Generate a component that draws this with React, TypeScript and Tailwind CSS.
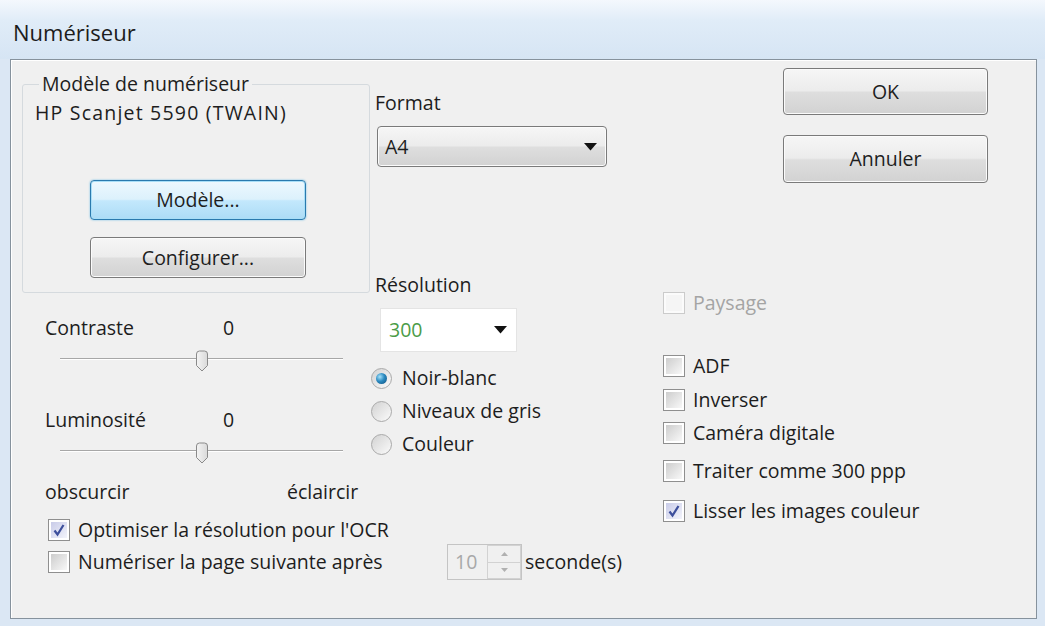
import type { ReactNode } from 'react'

const grayBtn =
  'border-[#7a7a7a] bg-[linear-gradient(to_bottom,#f6f6f6_0%,#ececec_48%,#dedede_52%,#d2d2d2_100%)] shadow-[inset_0_0_0_1px_#fbfbfb]'
const hotBtn =
  'border-[#2a7aae] bg-[linear-gradient(to_bottom,#edf8fe_0%,#dcf1fc_48%,#c3e8fc_52%,#acdcf6_100%)] shadow-[inset_0_0_0_1px_#a8def7,0_0_2px_#62b7e3]'

function WinButton({ children, hot, className }: { children: ReactNode; hot?: boolean; className?: string }) {
  return (
    <button
      type="button"
      className={`flex items-center justify-center rounded-[4px] border text-[#1e1e1e] ${hot ? hotBtn : grayBtn} ${className ?? ''}`}
    >
      {children}
    </button>
  )
}

function Arrow() {
  return (
    <svg width="13" height="8" viewBox="0 0 13 8">
      <polygon points="0,0 13,0 6.5,7.5" fill="#111" />
    </svg>
  )
}

function Check({ checked, disabled }: { checked?: boolean; disabled?: boolean }) {
  let inner = 'bg-[linear-gradient(135deg,#cdcdcd,#f8f8f8)]'
  if (checked) inner = 'bg-[linear-gradient(135deg,#c8cbe8,#f3f4fb)]'
  if (disabled) inner = 'bg-[#f5f5f5]'
  return (
    <span
      className={`flex h-[22px] w-[22px] shrink-0 items-center justify-center border ${
        disabled ? 'border-[#cbcbcb] bg-[#fbfbfb]' : 'border-[#8f8f8f] bg-white'
      }`}
    >
      <span className={`flex h-[16px] w-[16px] items-center justify-center ${inner}`}>
        {checked && (
          <svg width="14" height="14" viewBox="0 0 14 14">
            <path d="M2.5 7.5 L5.5 11.5 L11.5 2" fill="none" stroke="#3d4f9c" strokeWidth="2.2" />
          </svg>
        )}
      </span>
    </span>
  )
}

function CheckRow({
  label,
  checked,
  disabled,
  className,
}: {
  label: string
  checked?: boolean
  disabled?: boolean
  className?: string
}) {
  return (
    <div className={`flex h-[24px] items-center gap-[8px] ${className ?? ''}`}>
      <Check checked={checked} disabled={disabled} />
      <span className={disabled ? 'text-[#a4a4a4]' : ''}>{label}</span>
    </div>
  )
}

function Radio({ label, checked }: { label: string; checked?: boolean }) {
  return (
    <div className="flex h-[22px] items-center gap-[10px]">
      <span className="flex h-[21px] w-[21px] shrink-0 items-center justify-center rounded-full border border-[#a9a9a9] bg-[linear-gradient(135deg,#d2d2d2,#fbfbfb)]">
        {checked && (
          <span className="h-[11px] w-[11px] rounded-full bg-[radial-gradient(circle_at_35%_35%,#a6e2fb_0%,#2b8ac0_45%,#0c4c7c_100%)]" />
        )}
      </span>
      <span>{label}</span>
    </div>
  )
}

function Slider() {
  return (
    <div className="relative ml-[38px] mt-[11px] h-[22px] w-[283px]">
      <div className="mt-[8px] h-px bg-[#a7a7a7]" />
      <div className="h-px bg-white" />
      <svg className="absolute left-[135px] top-0" width="14" height="22" viewBox="0 0 14 22">
        <defs>
          <linearGradient id="thumb" x1="0" x2="1" y1="0" y2="0">
            <stop offset="0" stopColor="#f4f4f4" />
            <stop offset="1" stopColor="#d9d9d9" />
          </linearGradient>
        </defs>
        <path
          d="M1.5 4 Q1.5 1 4.5 1 H9.5 Q12.5 1 12.5 4 V15.5 L7 21 L1.5 15.5 Z"
          fill="url(#thumb)"
          stroke="#8a8a8a"
          strokeWidth="1"
        />
      </svg>
    </div>
  )
}

export default function App() {
  return (
    <div className="flex h-[626px] w-[1045px] flex-col bg-[#dbe7f4] font-['Open_Sans','Noto_Sans',sans-serif] text-[19.5px] leading-[22px] text-[#1d1d1d]">
      <div className="flex h-[59px] shrink-0 items-center bg-[linear-gradient(to_bottom,#f4f8fd_0%,#e0ecf8_35%,#d6e5f4_100%)] pl-[13px] pt-[4px] text-[22px] text-[#1c1c1c]">
        Numériseur
      </div>

      <div className="ml-[10px] grid h-[560px] w-[1027px] grid-cols-[349px_291px_1fr] grid-rows-[auto_1fr] border border-[#86929d] bg-[#f0f0f0] pl-[11px] shadow-[inset_1px_1px_0_#fff]">
        {/* left column */}
        <div className="flex flex-col">
          <fieldset className="mt-[13px] h-[220px] w-[348px] rounded-[3px] border border-[#d5dade] pl-[12px]">
            <legend className="ml-[4px] px-[3px]">Modèle de numériseur</legend>
            <div className="mt-[7px] tracking-[1.2px]">HP Scanjet 5590 (TWAIN)</div>
            <WinButton hot className="ml-[55px] mt-[56px] h-[40px] w-[216px]">
              Modèle...
            </WinButton>
            <WinButton className="ml-[55px] mt-[17px] h-[41px] w-[216px]">Configurer...</WinButton>
          </fieldset>

          <div className="ml-[23px] mt-[24px] flex">
            <span className="w-[178px]">Contraste</span>
            <span>0</span>
          </div>
          <Slider />
          <div className="ml-[23px] mt-[37px] flex">
            <span className="w-[178px]">Luminosité</span>
            <span>0</span>
          </div>
          <Slider />
          <div className="ml-[23px] mt-[17px] flex">
            <span className="w-[242px]">obscurcir</span>
            <span>éclaircir</span>
          </div>
        </div>

        {/* middle column */}
        <div className="flex flex-col items-start">
          <div className="ml-[4px] mt-[32px]">Format</div>
          <div className={`ml-[6px] mt-[12px] flex h-[41px] w-[230px] items-center justify-between rounded-[4px] border pl-[7px] pr-[9px] ${grayBtn}`}>
            <span className="text-[#1e1e1e]">A4</span>
            <Arrow />
          </div>
          <div className="ml-[4px] mt-[107px]">Résolution</div>
          <div className="ml-[9px] mt-[12px] flex h-[44px] w-[137px] items-center justify-between border border-[#e4e4e4] bg-white pl-[8px] pr-[9px]">
            <span className="text-[#4b9c47]">300</span>
            <Arrow />
          </div>
          <div className="mt-[15px] flex flex-col gap-[11px]">
            <Radio label="Noir-blanc" checked />
            <Radio label="Niveaux de gris" />
            <Radio label="Couleur" />
          </div>
        </div>

        {/* right column */}
        <div className="row-span-2 flex flex-col">
          <WinButton className="ml-[121px] mt-[8px] h-[47px] w-[205px]">OK</WinButton>
          <WinButton className="ml-[121px] mt-[20px] h-[48px] w-[205px]">Annuler</WinButton>
          <CheckRow label="Paysage" disabled className="ml-[1px] mt-[108px]" />
          <CheckRow label="ADF" className="ml-[1px] mt-[39px]" />
          <CheckRow label="Inverser" className="ml-[1px] mt-[10px]" />
          <CheckRow label="Caméra digitale" className="ml-[1px] mt-[9px]" />
          <CheckRow label="Traiter comme 300 ppp" className="ml-[1px] mt-[14px]" />
          <CheckRow label="Lisser les images couleur" checked className="ml-[1px] mt-[16px]" />
        </div>

        {/* bottom rows */}
        <div className="col-span-2 flex flex-col">
          <CheckRow label="Optimiser la résolution pour l'OCR" checked className="ml-[26px] mt-[15px]" />
          <div className="ml-[26px] mt-[2px] flex h-[36px] items-center">
            <CheckRow label="Numériser la page suivante après" className="w-[399px]" />
            <div className="flex h-[36px] w-[75px] border border-[#c4c4c4] bg-[#f0f0f0]">
              <span className="flex-1 pl-[7px] leading-[34px] text-[#a8a8a8]">10</span>
              <span className="flex w-[34px] flex-col border border-[#d2d2d2]">
                <span className="flex flex-1 items-center justify-center border-b border-[#d2d2d2]">
                  <svg width="7" height="4" viewBox="0 0 7 4">
                    <polygon points="0,4 7,4 3.5,0" fill="#b0b0b0" />
                  </svg>
                </span>
                <span className="flex flex-1 items-center justify-center">
                  <svg width="7" height="4" viewBox="0 0 7 4">
                    <polygon points="0,0 7,0 3.5,4" fill="#b0b0b0" />
                  </svg>
                </span>
              </span>
            </div>
            <span className="ml-[3px]">seconde(s)</span>
          </div>
        </div>
      </div>
    </div>
  )
}
